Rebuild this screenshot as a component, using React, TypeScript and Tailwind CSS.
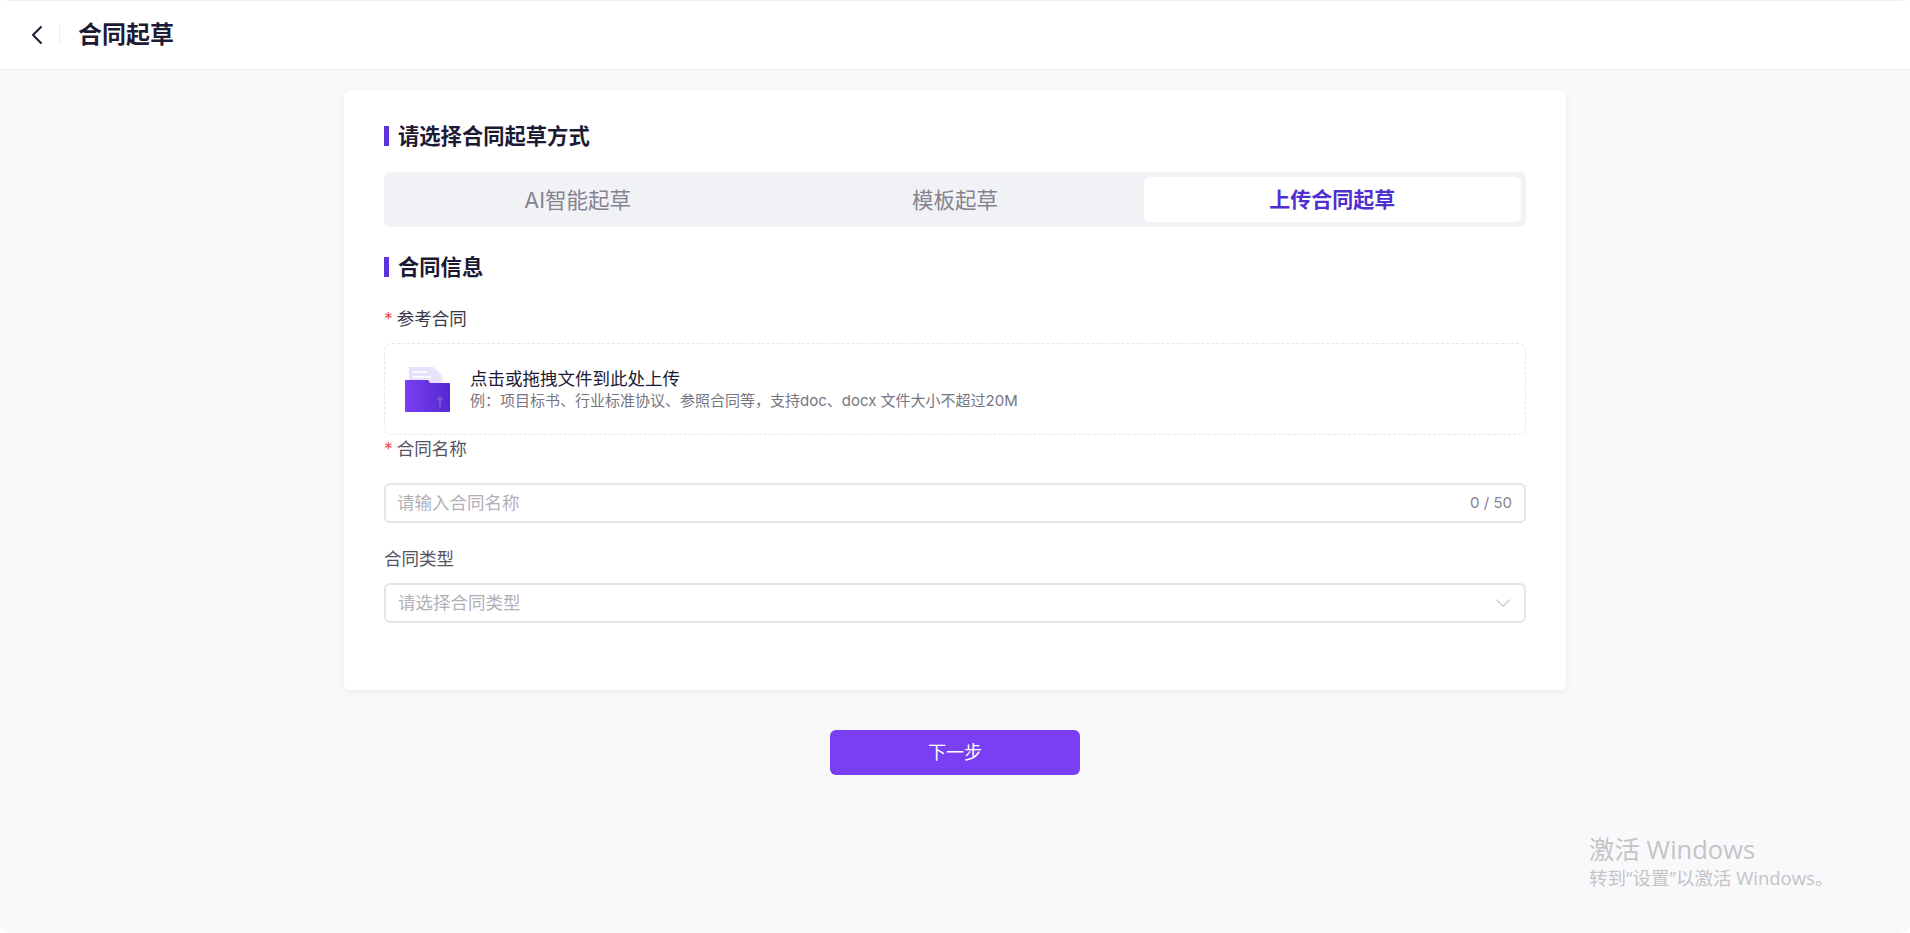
import { ChevronDown, ChevronLeft } from 'lucide-react';

const font = "font-['Inter','Noto_Sans_CJK_SC',sans-serif]";

const SectionTitle = ({ title }: { title: string }) => (
  <div className="flex h-5 items-center gap-[9px]">
    <div className="h-5 w-[5px] bg-[#5f33dc]"></div>
    <h2 className="text-[21.300px] leading-5 font-bold text-[#1d1a33]">{title}</h2>
  </div>
);

const FolderIcon = () => (
  <svg width="45" height="46" viewBox="0 0 45 46" className="shrink-0">
    <defs>
      <linearGradient id="folder" x1="0" y1="0" x2="1" y2="0">
        <stop offset="0" stopColor="#7a3ff2" />
        <stop offset="1" stopColor="#5428d0" />
      </linearGradient>
    </defs>
    <path d="M4 1h24l7 7v14H4z" fill="#e8e1fd" />
    <path d="M29 1l9 9v12h-3V8l-7-7z" fill="#f0ecfe" />
    <rect x="8" y="5" width="14" height="2" fill="#fbfaff" />
    <rect x="8" y="10" width="18" height="2" fill="#fbfaff" />
    <path d="M0 15a1 1 0 0 1 1-1h22l2 3h19a1 1 0 0 1 1 1v27a1 1 0 0 1-1 1H1a1 1 0 0 1-1-1z" fill="url(#folder)" />
    <path d="M34 41v-7h-2.500l3.500-4 3.500 4H36v7z" fill="#7a55e0" />
  </svg>
);

const tabs = [
  { id: 1, name: 'AI智能起草', active: false },
  { id: 2, name: '模板起草', active: false },
  { id: 3, name: '上传合同起草', active: true },
];

export default function App() {
  return (
    <div className={`${font} relative h-[933px] w-full overflow-hidden rounded-[10px] bg-[#f9f9fb]`}>
      <header className="flex h-[70px] items-center border-y border-[#ececee] border-t-[#eeeeee] bg-white pl-[21px]">
        <ChevronLeft className="h-8 w-8 text-[#1d1a33]" strokeWidth={1.5} />
        <div className="ml-[6px] h-5 w-px bg-[#eeeeee]"></div>
        <h1 className="ml-[18px] text-[24px] leading-8 font-bold text-[#1d1a33]">合同起草</h1>
      </header>

      <main className="flex flex-col items-center">
        <section className="mt-5 h-[600px] w-[1222px] rounded-md bg-white px-10 pt-9 shadow-[0_2px_8px_rgba(30,30,60,0.05)]">
          <SectionTitle title="请选择合同起草方式" />
          <div className="mt-[26px] grid h-[55px] grid-cols-3 rounded-md bg-[#f1f2f6] p-[5px]">
            {tabs.map((tab) => (
              <div
                key={tab.id}
                className={
                  tab.active
                    ? 'flex items-center justify-center rounded-md bg-white pt-px text-[21px] font-bold text-[#4f2fd0]'
                    : 'flex items-center justify-center pt-px text-[21.500px] text-[#85838f]'
                }
              >
                {tab.name}
              </div>
            ))}
          </div>

          <div className="mt-[30px]">
            <SectionTitle title="合同信息" />
          </div>

          <label className="mt-[31px] block text-[17.500px] leading-[22px] text-[#3a3848]">
            <span className="mr-1 text-[#f0524f]">*</span>参考合同
          </label>
          <div className="mt-[13px] flex h-[92px] items-center rounded-lg border border-dashed border-[#e6e6ea] pl-5">
            <FolderIcon />
            <div className="ml-5">
              <p className="text-[17.500px] leading-6 text-[#1d1a33]">点击或拖拽文件到此处上传</p>
              <p className="text-[15px] leading-5 text-[#77757f]">例：项目标书、行业标准协议、参照合同等，支持doc、docx 文件大小不超过20M</p>
            </div>
          </div>

          <label className="mt-[3px] block text-[17.500px] leading-[22px] text-[#55535f]">
            <span className="mr-1 text-[#f0524f]">*</span>合同名称
          </label>
          <div className="mt-[23px] flex h-10 items-center justify-between rounded-md border-2 border-[#e4e4ea] pr-3 pl-[11px]">
            <span className="text-[17.500px] text-[#b1b0b8]">请输入合同名称</span>
            <span className="text-[15px] text-[#85838f]">0 / 50</span>
          </div>

          <label className="mt-[25px] block text-[17.500px] leading-[22px] text-[#55535f]">合同类型</label>
          <div className="mt-[13px] flex h-10 items-center justify-between rounded-md border-2 border-[#e4e4ea] pr-2 pl-[12px]">
            <span className="text-[17.500px] text-[#b1b0b8]">请选择合同类型</span>
            <ChevronDown className="h-[26px] w-[26px] text-[#a3a2ab]" strokeWidth={0.9} />
          </div>
        </section>

        <button className="mt-10 h-[45px] w-[250px] rounded-md bg-[#7a3ff2] text-[18px] text-white">下一步</button>
      </main>

      <div className="absolute top-[833px] left-[1589px] font-['Open_Sans','Noto_Sans_CJK_SC',sans-serif] text-[#c4c4c6]">
        <p className="text-[25.500px] leading-8">激活 Windows</p>
        <p className="mt-[3px] text-[18.500px] leading-5">转到“设置”以激活 Windows。</p>
      </div>
    </div>
  );
}
